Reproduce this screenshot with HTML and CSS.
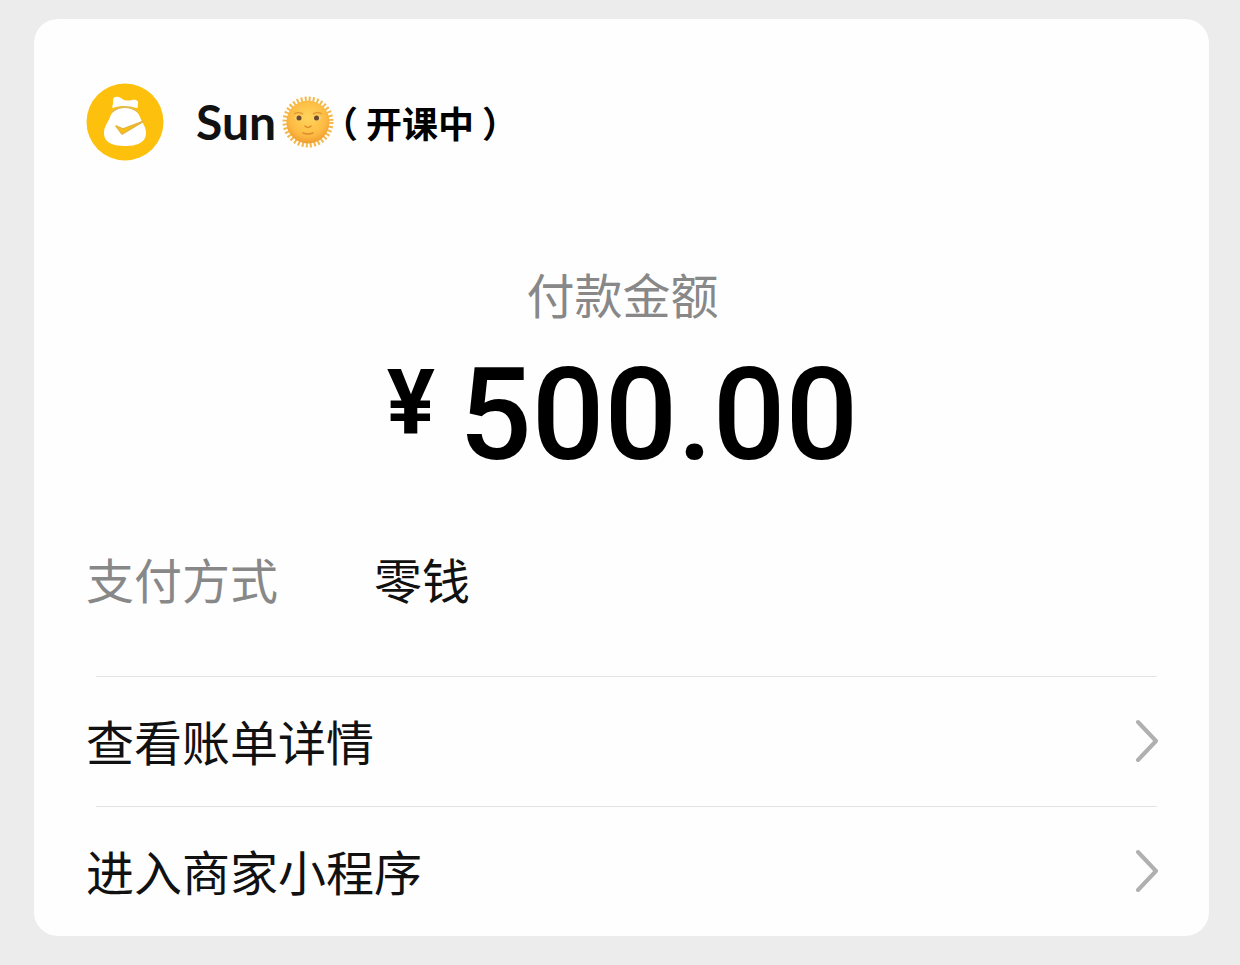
FILE: index.html
```html
<!DOCTYPE html>
<html lang="zh-CN">
<head>
  <meta charset="UTF-8" />
  <meta name="viewport" content="width=device-width, initial-scale=1" />
  <title>付款金额</title>
  <link rel="stylesheet" href="styles.css">
</head>
<body>
  <main class="card">
    <header class="payee">
      <svg class="logo" viewBox="0 0 78 78" aria-hidden="true">
        <circle cx="39" cy="39" r="38.500" fill="#fdc10d"/>
        <!-- money bag -->
        <path d="M27 17 C27 13 32 13 35 15 C38 18 42 18 46 17 C50 16 53 18 52 21 C51 23 53 24 51 25 C43 23 35 22 27 25 C25 24 28 21 27 17Z" fill="#fff"/>
        <path d="M39 25 C46 25 52 28 54 34 C55 38 60 43 60 50 C60 60 50 63 39 63 C28 63 18 60 18 50 C18 43 23 38 24 34 C26 28 32 25 39 25Z" fill="#fff"/>
        <path d="M26 29 Q39 19 52 29" fill="none" stroke="#d9bb64" stroke-width="1.5"/>
        <path d="M30 43 L36 51 L58 38 L37 46Z" fill="#fdc10d" stroke="#e6b53a" stroke-width="1.5" stroke-linejoin="round"/>
      </svg>
      <h1 class="name">
        <span class="nick">Sun</span>
        <svg class="sun" viewBox="0 0 52 52" role="img" aria-label="🌞">
          <defs>
            <radialGradient id="face" cx="50%" cy="40%" r="60%">
              <stop offset="0" stop-color="#ffd55c"/>
              <stop offset="0.7" stop-color="#fdbb43"/>
              <stop offset="1" stop-color="#f09c30"/>
            </radialGradient>
          </defs>
          <!-- rays -->
          <circle cx="26" cy="26" r="23" fill="none" stroke="#f3b84a" stroke-width="5" stroke-dasharray="2 2.014"/>
          <circle cx="26" cy="26" r="21.500" fill="url(#face)"/>
          <path d="M12 18 Q16 15 21 18 M31 18 Q36 15 40 18" fill="none" stroke="#e09a35" stroke-width="1.5"/>
          <ellipse cx="16.500" cy="22" rx="4" ry="2.500" fill="#f2cf85"/>
          <ellipse cx="35" cy="22" rx="4" ry="2.500" fill="#f2cf85"/>
          <circle cx="17" cy="22" r="2.500" fill="#6b4a2a"/>
          <circle cx="34.500" cy="22" r="2.500" fill="#6b4a2a"/>
          <path d="M23 30 Q26 33 29 30 M21 37 Q26 39 31 37" fill="none" stroke="#df8b2b" stroke-width="1.5" stroke-linecap="round"/>
        </svg>
        <span class="status"><span>（</span><span>开课中</span><span>）</span></span>
      </h1>
    </header>

    <section class="total">
      <p class="label">付款金额</p>
      <p class="amount"><span class="currency">¥</span><span>500.00</span></p>
    </section>

    <dl class="method">
      <dt>支付方式</dt>
      <dd>零钱</dd>
    </dl>

    <nav class="links">
      <a class="link" href="#">
        <span>查看账单详情</span>
        <svg class="arrow" viewBox="0 0 24 44" aria-hidden="true"><path d="M3 4 L21 23 L3 42"/></svg>
      </a>
      <a class="link" href="#">
        <span>进入商家小程序</span>
        <svg class="arrow" viewBox="0 0 24 44" aria-hidden="true"><path d="M3 4 L21 23 L3 42"/></svg>
      </a>
    </nav>
  </main>
</body>
</html>
```

FILE: styles.css
```css
* {
  box-sizing: border-box;
}
body {
  margin: 0;
  padding: 19px 31px 30px 34px;
  background-color: #ececec;
  color: #111;
  font-family: "Noto Sans CJK SC", sans-serif;
  font-size: 48px;
  line-height: 56px;
}
h1, p, dl, dd {
  margin: 0;
}
.card {
  padding: 64px 50px 0 52px;
  background: #fefefe;
  border-radius: 24px;
}
.payee {
  display: flex;
  align-items: center;
  gap: 32px;
}
.logo {
  width: 78px;
  height: 78px;
}
.name {
  display: flex;
  align-items: center;
  gap: 6px;
  font-weight: 500;
}
.nick {
  font-family: Lato, sans-serif;
  font-size: 48px;
  font-weight: 700;
}
.sun {
  width: 52px;
  height: 52px;
}
.status {
  display: flex;
  gap: 8px;
  color: #000;
  font-size: 36px;
  font-weight: 700;
  font-feature-settings: "halt";
}
.total {
  margin-top: 104px;
  text-align: center;
}
.label {
  color: #888;
}
.amount {
  display: flex;
  justify-content: center;
  gap: 24px;
  margin-top: 30px;
  color: #000;
  font-family: Roboto, sans-serif;
  font-size: 128px;
  font-weight: 500;
  line-height: 128px;
}
.currency {
  padding-top: 8px;
  font-size: 90px;
  font-weight: 700;
  line-height: 90px;
}
.method {
  display: flex;
  gap: 96px;
  margin: 71px 0 70px;
}
.method dt {
  color: #888;
}
.link {
  position: relative;
  display: flex;
  align-items: center;
  justify-content: space-between;
  height: 130px;
  padding-bottom: 2px;
  color: #111;
  text-decoration: none;
}
/* divider is inset a little from the text */
.link::before {
  content: "";
  position: absolute;
  top: 0;
  left: 10px;
  right: 2px;
  border-top: 1px solid #e4e4e4;
}
.arrow {
  width: 24px;
  height: 44px;
  fill: none;
  stroke: #b0b0b0;
  stroke-width: 4;
  stroke-linecap: round;
  stroke-linejoin: round;
}
```
